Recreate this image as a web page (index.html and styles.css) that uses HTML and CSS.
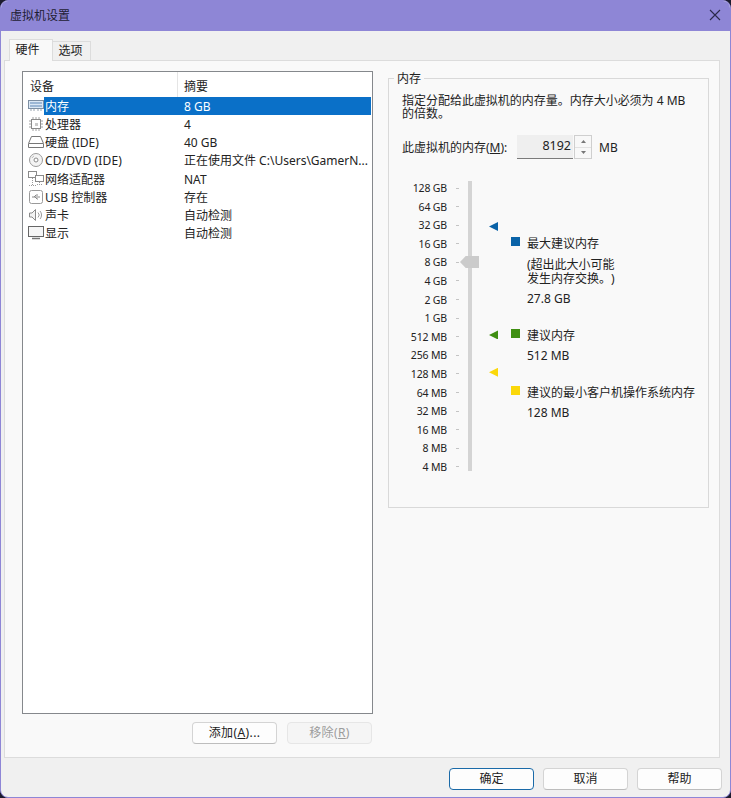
FILE: index.html
```html
<!DOCTYPE html>
<html lang="zh">
<head>
  <meta charset="UTF-8">
  <title>虚拟机设置</title>
  <link rel="stylesheet" href="styles.css">
</head>
<body>
<div class="window">
  <div class="titlebar">
    <span>虚拟机设置</span>
    <svg class="close-icon" width="12" height="12" viewBox="0 0 12 12"><path d="M1 1l10 10M11 1L1 11" stroke="#2b2a4a" stroke-width="1.1" fill="none"/></svg>
  </div>
  <div class="dialog">
    <div class="tabs">
      <div class="tab tab-active">硬件</div>
      <div class="tab">选项</div>
    </div>
    <div class="tab-panel">
      <div class="device-col">
        <div class="device-list">
          <div class="list-head">
            <div class="head-name">设备</div>
            <div class="head-summary">摘要</div>
          </div>
          <div class="row row-selected">
            <svg class="row-icon" width="16" height="14" viewBox="0 0 16 14"><rect x="0.5" y="1.5" width="15" height="8" fill="#dbe8f5" stroke="#7d8fa3"/><path d="M2 4h12M2 7h12" stroke="#5f87b5"/><path d="M3 10v2M6 10v2M10 10v2M13 10v2" stroke="#9aa5b0"/></svg>
            <div class="cell-name">内存</div>
            <div class="cell-summary">8 GB</div>
          </div>
          <div class="row">
            <svg class="row-icon" width="16" height="16" viewBox="0 0 16 16"><rect x="3.5" y="3.5" width="9" height="9" fill="#fff" stroke="#8a8a8a"/><rect x="7" y="7" width="3" height="3" fill="#c9c9c9"/><path d="M1 5h2M1 8h2M1 11h2M13 5h2M13 8h2M13 11h2M5 1v2M8 1v2M11 1v2M5 13v2M8 13v2M11 13v2" stroke="#a0a0a0"/></svg>
            <div class="cell-name">处理器</div>
            <div class="cell-summary">4</div>
          </div>
          <div class="row">
            <svg class="row-icon" width="16" height="14" viewBox="0 0 16 14"><path d="M3.5 1.5h9l3 7v4h-15v-4z" fill="#fff" stroke="#777"/><path d="M1 8.5h14" stroke="#777"/></svg>
            <div class="cell-name">硬盘 (IDE)</div>
            <div class="cell-summary">40 GB</div>
          </div>
          <div class="row">
            <svg class="row-icon" width="16" height="16" viewBox="0 0 16 16"><circle cx="8" cy="8" r="6.5" fill="#f4f4f4" stroke="#9a9a9a"/><circle cx="8" cy="8" r="2" fill="#fff" stroke="#8a8a8a"/><path d="M4 6a4.5 4.5 0 0 1 2-2" stroke="#bbb" fill="none"/></svg>
            <div class="cell-name cell-wide">CD/DVD (IDE)</div>
            <div class="cell-summary">正在使用文件 C:\Users\GamerN...</div>
          </div>
          <div class="row">
            <svg class="row-icon" width="16" height="16" viewBox="0 0 16 16"><rect x="0.5" y="0.5" width="8" height="6" fill="#fff" stroke="#8a8a8a"/><rect x="7.5" y="4.5" width="8" height="6" fill="#fff" stroke="#8a8a8a"/><path d="M11.5 11v2M9 13.5h5M4.5 7v7.500M1 14.500h7" stroke="#9a9a9a" stroke-dasharray="1 1"/></svg>
            <div class="cell-name">网络适配器</div>
            <div class="cell-summary">NAT</div>
          </div>
          <div class="row">
            <svg class="row-icon" width="16" height="16" viewBox="0 0 16 16"><rect x="1.500" y="1.500" width="13" height="13" rx="2" fill="#fff" stroke="#9a9a9a"/><path d="M4 8h8M6 8l2-2h2M7 8l2 2h1" stroke="#8a8a8a" fill="none"/></svg>
            <div class="cell-name">USB 控制器</div>
            <div class="cell-summary">存在</div>
          </div>
          <div class="row">
            <svg class="row-icon" width="16" height="14" viewBox="0 0 16 14"><path d="M1.500 5h2.500l3.500-3.500v11L4 9H1.500z" fill="#f2f2f2" stroke="#8a8a8a"/><path d="M10 4.500a3.500 3.500 0 0 1 0 5M12 3a6 6 0 0 1 0 8" stroke="#9a9a9a" fill="none"/></svg>
            <div class="cell-name">声卡</div>
            <div class="cell-summary">自动检测</div>
          </div>
          <div class="row">
            <svg class="row-icon" width="16" height="14" viewBox="0 0 16 14"><rect x="0.5" y="0.5" width="15" height="10" fill="#f6f6f6" stroke="#666"/><path d="M4 12.500h8" stroke="#777" stroke-width="1.500"/></svg>
            <div class="cell-name">显示</div>
            <div class="cell-summary">自动检测</div>
          </div>
        </div>
        <div class="device-buttons">
          <div class="btn">添加(<u>A</u>)...</div>
          <div class="btn btn-disabled">移除(<u>R</u>)</div>
        </div>
      </div>

      <fieldset class="memory-group">
        <legend>内存</legend>
        <p class="memory-desc">指定分配给此虚拟机的内存量。内存大小必须为 4 MB<br>的倍数。</p>
        <div class="memory-input">
          <span class="memory-label">此虚拟机的内存(<u>M</u>):</span>
          <div class="spin-field">8192</div>
          <div class="spin-buttons">
            <div class="spin-btn"><svg width="5" height="3" viewBox="0 0 5 3"><path d="M2.500 0L5 3H0z" fill="#777"/></svg></div>
            <div class="spin-btn"><svg width="5" height="3" viewBox="0 0 5 3"><path d="M2.500 3L5 0H0z" fill="#777"/></svg></div>
          </div>
          <span class="spin-unit">MB</span>
        </div>
        <div class="memory-body">
          <div class="scale">
            <div class="track"></div>
            <div class="scale-row"><span class="scale-label">128 GB</span><i class="tick"></i></div>
            <div class="scale-row"><span class="scale-label">64 GB</span><i class="tick"></i></div>
            <div class="scale-row"><span class="scale-label">32 GB</span><i class="tick"></i><b class="arrow arrow-blue"></b></div>
            <div class="scale-row"><span class="scale-label">16 GB</span><i class="tick"></i></div>
            <div class="scale-row"><span class="scale-label">8 GB</span><i class="tick"></i><div class="thumb"></div></div>
            <div class="scale-row"><span class="scale-label">4 GB</span><i class="tick"></i></div>
            <div class="scale-row"><span class="scale-label">2 GB</span><i class="tick"></i></div>
            <div class="scale-row"><span class="scale-label">1 GB</span><i class="tick"></i></div>
            <div class="scale-row"><span class="scale-label">512 MB</span><i class="tick"></i><b class="arrow arrow-green"></b></div>
            <div class="scale-row"><span class="scale-label">256 MB</span><i class="tick"></i></div>
            <div class="scale-row"><span class="scale-label">128 MB</span><i class="tick"></i><b class="arrow arrow-yellow"></b></div>
            <div class="scale-row"><span class="scale-label">64 MB</span><i class="tick"></i></div>
            <div class="scale-row"><span class="scale-label">32 MB</span><i class="tick"></i></div>
            <div class="scale-row"><span class="scale-label">16 MB</span><i class="tick"></i></div>
            <div class="scale-row"><span class="scale-label">8 MB</span><i class="tick"></i></div>
            <div class="scale-row"><span class="scale-label">4 MB</span><i class="tick"></i></div>
          </div>
          <div class="legend">
            <div class="legend-title"><i class="swatch swatch-blue"></i>最大建议内存</div>
            <div class="legend-note">(超出此大小可能<br>发生内存交换。)</div>
            <div class="legend-value">27.8 GB</div>
            <div class="legend-title legend-gap"><i class="swatch swatch-green"></i>建议内存</div>
            <div class="legend-value legend-value-tight">512 MB</div>
            <div class="legend-title legend-gap"><i class="swatch swatch-yellow"></i>建议的最小客户机操作系统内存</div>
            <div class="legend-value legend-value-tight">128 MB</div>
          </div>
        </div>
      </fieldset>
    </div>
    <div class="footer">
      <div class="btn btn-default">确定</div>
      <div class="btn">取消</div>
      <div class="btn">帮助</div>
    </div>
  </div>
</div>
</body>
</html>
```

FILE: styles.css
```css
html, body {
  margin: 0;
  padding: 0;
  background: #1c1b2e;
}

body {
  font-family: "Noto Sans", "Noto Sans CJK SC", sans-serif;
  font-size: 12px;
  color: #222;
}

u {
  text-underline-offset: 1px;
}

.window {
  width: 731px;
  height: 798px;
  box-sizing: border-box;
  border: 1px solid #8e86d6;
  border-radius: 8px;
  overflow: hidden;
  display: flex;
  flex-direction: column;
  background: #f0f0f0;
}

.titlebar {
  height: 30px;
  box-sizing: border-box;
  flex: none;
  background: #8e86d6;
  display: flex;
  align-items: center;
  justify-content: space-between;
  padding: 0 9px 2px 9px;
  color: #1e1d33;
}

.dialog {
  flex: 1;
  display: flex;
  flex-direction: column;
}

.tabs {
  height: 29px;
  flex: none;
  display: flex;
  align-items: flex-end;
  padding-left: 8px;
}

.tab {
  width: 38px;
  height: 19px;
  line-height: 17px;
  padding-right: 2px;
  text-align: center;
  background: #f0f0f0;
  border: 1px solid #dcdcdc;
  border-bottom: none;
  border-left: none;
  box-sizing: border-box;
}

.tab-active {
  width: 44px;
  height: 22px;
  line-height: 20px;
  padding-right: 7px;
  background: #f9f9f9;
  border-left: 1px solid #dcdcdc;
  position: relative;
  top: 1px;
}

.tab-panel {
  width: 716px;
  height: 698px;
  box-sizing: border-box;
  margin-left: 3px;
  padding: 10px 0 0 17px;
  background: #f9f9f9;
  border: 1px solid #dcdcdc;
  display: flex;
  flex: none;
  gap: 15px;
  align-items: flex-start;
}

.device-col {
  width: 351px;
  flex: none;
}

.device-list {
  height: 643px;
  box-sizing: border-box;
  background: #fff;
  border: 1px solid #85888c;
}

.list-head {
  height: 25px;
  display: flex;
  line-height: 29px;
}

.head-name {
  width: 155px;
  box-sizing: border-box;
  padding-left: 7px;
  border-right: 1px solid #e5e5e5;
}

.head-summary {
  padding-left: 6px;
}

.row {
  height: 18.15px;
  display: flex;
  align-items: stretch;
  position: relative;
  padding-left: 21px;
}

.row-icon {
  position: absolute;
  left: 5px;
  top: 50%;
  transform: translateY(-50%);
}

.cell-name {
  width: 134px;
  flex: none;
  box-sizing: border-box;
  padding-left: 1px;
  line-height: 20px;
  white-space: nowrap;
}

.cell-wide {
  letter-spacing: 0.15px;
}

.cell-summary {
  flex: 1;
  padding-left: 6px;
  line-height: 20px;
  white-space: nowrap;
  overflow: hidden;
}

.row-selected .cell-name,
.row-selected .cell-summary {
  background: #0a70c8;
  color: #fff;
}

.row-selected .cell-summary {
  margin-right: 1px;
}

.device-buttons {
  display: flex;
  justify-content: flex-end;
  gap: 10px;
  margin-top: 8px;
  padding-right: 1px;
  letter-spacing: 0.4px;
}

.btn {
  width: 85px;
  height: 22px;
  box-sizing: border-box;
  line-height: 20px;
  text-align: center;
  background: #fdfdfd;
  border: 1px solid #d4d4d4;
  border-bottom-color: #bdbdbd;
  border-radius: 4px;
}

.btn-disabled {
  background: #f5f5f5;
  border-color: #e6e6e6;
  color: #9c9c9c;
}

.btn-default {
  border-color: #1a6aa8;
}

.memory-group {
  width: 321px;
  height: 437px;
  box-sizing: border-box;
  flex: none;
  margin: 0;
  padding: 0 0 0 13px;
  border: 1px solid #d9d9d9;
  min-width: 0;
}

.memory-group legend {
  padding: 0 3px;
  margin-left: -8px;
  height: 14px;
  line-height: 16px;
}

.memory-desc {
  margin: 9px 0 0 0;
  line-height: 13px;
  letter-spacing: -0.02px;
}

.memory-input {
  display: flex;
  align-items: center;
  height: 24px;
  margin-top: 15px;
}

.memory-label {
  width: 107px;
  flex: none;
  white-space: nowrap;
}

.spin-field {
  width: 56px;
  height: 24px;
  box-sizing: border-box;
  margin-left: 8px;
  padding-right: 2px;
  text-align: right;
  line-height: 22px;
  background: #efefef;
  border-bottom: 1px solid #7a7a7a;
  font-size: 12.500px;
}

.spin-buttons {
  width: 18px;
  height: 24px;
  margin-left: 1px;
  box-sizing: border-box;
  display: flex;
  flex-direction: column;
  border: 1px solid #cfcfcf;
  background: #f8f8f8;
}

.spin-btn {
  flex: 1;
  display: flex;
  align-items: center;
  justify-content: center;
}

.spin-btn + .spin-btn {
  border-top: 1px solid #e2e2e2;
}

.spin-unit {
  margin-left: 7px;
}

.memory-body {
  display: flex;
  margin-top: 20px;
}

.scale {
  position: relative;
  width: 96px;
  flex: none;
  margin-top: -0.3px;
}

.track {
  position: absolute;
  left: 66px;
  top: 2px;
  width: 4px;
  height: 290px;
  background: #d4d4d4;
}

.scale-row {
  position: relative;
  height: 18.600px;
  line-height: 18px;
  display: flex;
  align-items: center;
  font-size: 10.500px;
  letter-spacing: -0.15px;
  white-space: nowrap;
}

.scale-label {
  width: 45px;
  text-align: right;
}

.tick {
  width: 3px;
  height: 1px;
  margin-left: 9px;
  background: #c4c4c4;
}

.thumb {
  position: absolute;
  left: 58px;
  top: 3px;
  width: 19px;
  height: 12px;
  background: #cbcbcb;
  clip-path: polygon(0 50%, 30% 0, 100% 0, 100% 100%, 30% 100%);
}

.arrow {
  position: absolute;
  left: 87px;
  top: 3px;
  width: 9px;
  height: 9px;
  clip-path: polygon(0 50%, 100% 0, 100% 100%);
}

.arrow-blue { background: #0a63a8; top: 6px; }
.arrow-green { background: #3f8f12; }
.arrow-yellow { background: #fbd80a; }

.legend {
  padding-top: 57px;
  margin-left: 13px;
}

.legend-title {
  position: relative;
  padding-left: 16px;
  line-height: 16px;
  white-space: nowrap;
}

.swatch {
  position: absolute;
  left: 0;
  top: 1px;
  width: 9px;
  height: 9px;
}

.swatch-blue { background: #0a63a8; }
.swatch-green { background: #3f8f12; }
.swatch-yellow { background: #fbd80a; }

.legend-note {
  margin-top: 6px;
  padding-left: 16px;
  line-height: 14px;
  text-spacing-trim: space-all;
}

.legend-value {
  margin-top: 5px;
  padding-left: 16px;
  line-height: 16px;
}

.legend-value-tight {
  margin-top: 4px;
}

.legend-gap {
  margin-top: 21px;
}

.footer {
  flex: 1;
  display: flex;
  justify-content: flex-end;
  gap: 9px;
  padding: 10px 8px 0 0;
}
```
